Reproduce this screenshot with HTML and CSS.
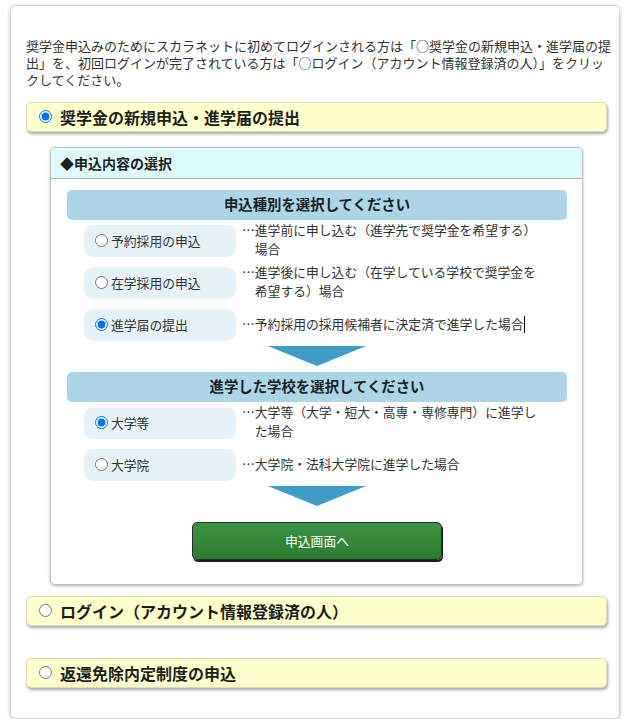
FILE: index.html
```html
<!DOCTYPE html>
<html lang="ja">
<head>
<meta charset="utf-8">
<title>スカラネット 申込</title>
<link rel="stylesheet" href="styles.css">
</head>
<body>
<main class="page">
  <p class="intro">奨学金申込みのためにスカラネットに初めてログインされる方は「○奨学金の新規申込・進学届の提出」を、初回ログインが完了されている方は「○ログイン（アカウント情報登録済の人）」をクリックしてください。</p>

  <div class="menu-item">
    <label><input type="radio" name="menu" checked><span>奨学金の新規申込・進学届の提出</span></label>
  </div>

  <section class="panel">
    <div class="panel-head">◆申込内容の選択</div>
    <div class="panel-body">
      <div class="sec-title">申込種別を選択してください</div>
      <div class="choices">
        <label class="opt"><input type="radio" name="kind"><span>予約採用の申込</span></label>
        <p class="desc">…進学前に申し込む（進学先で奨学金を希望する）場合</p>
        <label class="opt"><input type="radio" name="kind"><span>在学採用の申込</span></label>
        <p class="desc">…進学後に申し込む（在学している学校で奨学金を希望する）場合</p>
        <label class="opt"><input type="radio" name="kind" checked><span>進学届の提出</span></label>
        <p class="desc">…予約採用の採用候補者に決定済で進学した場合<span class="caret"></span></p>
      </div>
      <div class="arrow"></div>

      <div class="sec-title second">進学した学校を選択してください</div>
      <div class="choices">
        <label class="opt"><input type="radio" name="school" checked><span>大学等</span></label>
        <p class="desc">…大学等（大学・短大・高専・専修専門）に進学した場合</p>
        <label class="opt"><input type="radio" name="school"><span>大学院</span></label>
        <p class="desc">…大学院・法科大学院に進学した場合</p>
      </div>
      <div class="arrow"></div>

      <button type="button" class="submit">申込画面へ</button>
    </div>
  </section>

  <div class="menu-item login">
    <label><input type="radio" name="menu"><span>ログイン（アカウント情報登録済の人）</span></label>
  </div>

  <div class="menu-item exempt">
    <label><input type="radio" name="menu"><span>返還免除内定制度の申込</span></label>
  </div>
</main>
</body>
</html>
```

FILE: styles.css
```css
html, body {
  margin: 0;
  padding: 0;
  background: #fff;
}

body {
  font-family: "Noto Sans CJK JP", "Noto Sans", "Liberation Sans", sans-serif;
  color: #333;
}

.page {
  margin: 5px 10px 0;
  padding: 31px 12px 30px 15px;
  border: 1px solid #d6d6d6;
  border-radius: 6px;
  box-shadow: 0 1px 4px rgba(0, 0, 0, 0.25);
}

.intro {
  margin: 0 -4.5px 0 0;
  font-size: 13px;
  line-height: 17px;
  text-spacing-trim: normal;
}

/* yellow menu bars */
.menu-item {
  box-sizing: border-box;
  height: 30px;
  margin-top: 14px;
  padding-left: 12px;
  padding-bottom: 1px;
  display: flex;
  align-items: center;
  background: #ffffcc;
  border: 1px solid #dedbb6;
  border-radius: 5px;
  box-shadow: 1px 2px 3px rgba(0, 0, 0, 0.35);
}

.menu-item.login {
  margin-top: 11px;
}

.menu-item.exempt {
  margin-top: 32px;
}

.menu-item label {
  display: flex;
  align-items: center;
  gap: 8px;
  font-size: 16px;
  font-weight: bold;
  color: #1e1e1e;
  line-height: 20px;
}

.menu-item input {
  margin: 0;
  width: 13px;
  height: 13px;
}

/* inner panel */
.panel {
  margin: 15px 24px 0;
  border: 1px solid #c4c4c4;
  border-radius: 5px;
  box-shadow: 0 1px 3px rgba(0, 0, 0, 0.3);
}

.panel-head {
  height: 30px;
  padding-left: 9px;
  display: flex;
  align-items: center;
  background: #ddfdfd;
  border-bottom: 1px solid #b5b5b5;
  border-radius: 4px 4px 0 0;
  font-size: 14px;
  font-weight: bold;
  color: #1e1e1e;
}

.panel-body {
  padding: 11px 15px 24px 16px;
  display: flex;
  flex-direction: column;
}

.sec-title {
  box-sizing: border-box;
  height: 30px;
  padding-bottom: 3px;
  display: flex;
  align-items: center;
  justify-content: center;
  background: #aad6e5;
  border-radius: 5px;
  font-size: 14.4px;
  font-weight: bold;
  color: #1e1e1e;
}

.sec-title.second {
  margin-top: 6px;
}

.choices {
  display: grid;
  grid-template-columns: 152px 303px;
  grid-auto-rows: 42px;
  column-gap: 6px;
  padding-left: 17px;
  align-items: center;
}

.opt {
  box-sizing: border-box;
  height: 32px;
  padding-left: 11px;
  padding-bottom: 2px;
  display: flex;
  align-items: center;
  gap: 3px;
  background: #e6f2f7;
  border-radius: 9px;
  font-size: 12.8px;
  color: #333;
}

.opt input {
  margin: 0;
  width: 13px;
  height: 13px;
}

.desc {
  margin: 0 0 4px;
  padding-left: 1em;
  text-indent: -1em;
  font-size: 12.8px;
  line-height: 19px;
  color: #333;
}

.caret {
  display: inline-block;
  width: 1px;
  height: 17px;
  background: #000;
  vertical-align: -4px;
}

.arrow {
  align-self: center;
  width: 0;
  height: 0;
  border-left: 49px solid transparent;
  border-right: 49px solid transparent;
  border-top: 20px solid #3d9dc8;
}

.submit {
  align-self: center;
  box-sizing: border-box;
  width: 250px;
  height: 38px;
  margin-top: 16px;
  padding-bottom: 2px;
  background: linear-gradient(#3d9441, #2b7b2f);
  border: 1px solid #2a2a2a;
  border-radius: 5px;
  box-shadow: 1px 2px 0 #1c1c1c;
  color: #fff;
  font-family: inherit;
  font-size: 12.8px;
  cursor: pointer;
}
```
